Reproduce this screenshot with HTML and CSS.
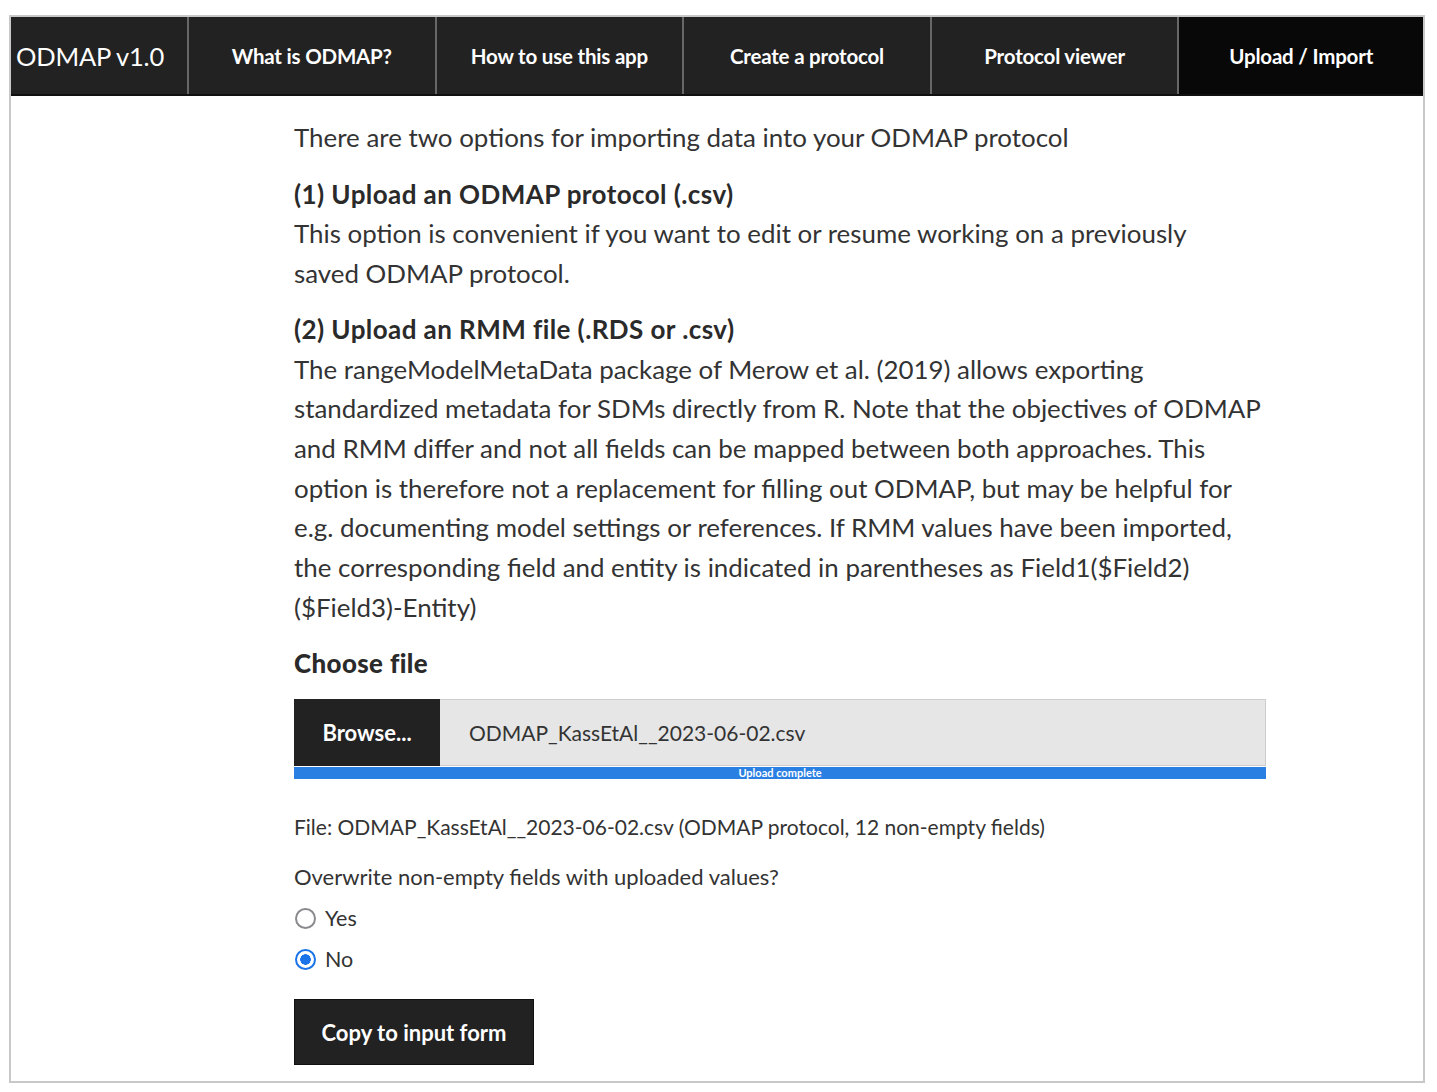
FILE: index.html
```html
<!DOCTYPE html>
<html lang="en">
<head>
<meta charset="utf-8">
<title>ODMAP v1.0 – Upload / Import</title>
<link rel="stylesheet" href="styles.css">
</head>
<body>
<div class="frame">
  <nav class="navbar">
    <div class="brand">ODMAP v1.0</div>
    <ul class="nav-items">
      <li class="nav-item">What is ODMAP?</li>
      <li class="nav-item">How to use this app</li>
      <li class="nav-item">Create a protocol</li>
      <li class="nav-item">Protocol viewer</li>
      <li class="nav-item active">Upload / Import</li>
    </ul>
  </nav>

  <main class="content">
    <p class="intro">There are two options for importing data into your ODMAP protocol</p>

    <section class="option">
      <h4 class="option-title">(1) Upload an ODMAP protocol (.csv)</h4>
      <p>This option is convenient if you want to edit or resume working on a previously<br>saved ODMAP protocol.</p>
    </section>

    <section class="option">
      <h4 class="option-title">(2) Upload an RMM file (.RDS or .csv)</h4>
      <p>The rangeModelMetaData package of Merow et al. (2019) allows exporting<br>standardized metadata for SDMs directly from R. Note that the objectives of ODMAP<br>and RMM differ and not all fields can be mapped between both approaches. This<br>option is therefore not a replacement for filling out ODMAP, but may be helpful for<br>e.g. documenting model settings or references. If RMM values have been imported,<br>the corresponding field and entity is indicated in parentheses as Field1($Field2)<br>($Field3)-Entity)</p>
    </section>

    <div class="file-group">
      <label class="file-label">Choose file</label>
      <div class="file-input">
        <span class="browse-btn">Browse...</span>
        <span class="file-name">ODMAP_KassEtAl__2023-06-02.csv</span>
      </div>
      <div class="progress"><span>Upload complete</span></div>
    </div>

    <p class="small-text file-info">File: ODMAP_KassEtAl__2023-06-02.csv (ODMAP protocol, 12 non-empty fields)</p>

    <div class="radio-group">
      <p class="radio-label">Overwrite non-empty fields with uploaded values?</p>
      <div class="radio"><span class="radio-circle"></span><span>Yes</span></div>
      <div class="radio"><span class="radio-circle checked"></span><span>No</span></div>
    </div>

    <button class="copy-btn" type="button">Copy to input form</button>
  </main>
</div>
</body>
</html>
```

FILE: styles.css
```css
* { box-sizing: border-box; }

body {
  margin: 0;
  background: #fff;
  font-family: Lato, "Noto Sans", sans-serif;
  color: #333;
}

.frame {
  margin: 15px 0 0 9px;
  width: 1416px;
  height: 1068px;
  border: 2px solid #c8c8c8;
  background: #fff;
}

.navbar {
  display: flex;
  height: 79px;
  background: #222;
  border-bottom: 2px solid #101010;
}

.brand {
  flex: none;
  width: 176px;
  display: flex;
  align-items: center;
  padding-left: 5px;
  color: #fff;
  font-size: 25.5px;
  font-weight: 400;
  letter-spacing: -0.2px;
}

.nav-items {
  display: flex;
  flex: 1;
  margin: 0;
  padding: 0;
  list-style: none;
}

.nav-item {
  flex: none;
  width: 247.6px;
  display: flex;
  align-items: center;
  justify-content: center;
  border-left: 2px solid #676767;
  color: #fff;
  font-size: 20.5px;
  font-weight: 700;
  letter-spacing: -0.2px;
}

.nav-item.active {
  flex: 1 1 0;
  width: auto;
  background: #080808;
}

.content {
  width: 1000px;
  margin: 22px 0 0 283px;
  font-size: 25.9px;
  line-height: 39.7px;
  color: #333;
}

.content p { margin: 0; }

.intro { margin-bottom: 17px !important; }

.option { margin-bottom: 16px; }

.option-title {
  margin: 0;
  font-size: 26px;
  line-height: 39.7px;
  font-weight: 700;
  letter-spacing: 0.42px;
  color: #2a2a2a;
}

.file-group { width: 972px; }

.file-label {
  display: block;
  font-weight: 900;
  letter-spacing: 0.4px;
  color: #2a2a2a;
  line-height: 40px;
  margin-bottom: 16px;
}

.file-input {
  display: flex;
  height: 67px;
}

.browse-btn {
  width: 146px;
  display: flex;
  align-items: center;
  justify-content: center;
  background: #222;
  color: #fff;
  font-size: 22px;
  font-weight: 700;
}

.file-name {
  flex: 1;
  display: flex;
  align-items: center;
  padding-left: 29px;
  background: #e6e6e6;
  border: 1px solid #cdcdcd;
  border-left: none;
  color: #333;
  font-size: 21px;
}

.progress {
  margin-top: 1px;
  height: 12px;
  background: #2a7fe2;
  display: flex;
  justify-content: center;
  align-items: center;
}

.progress span {
  color: #fff;
  font-size: 11px;
  line-height: 12px;
  font-weight: 700;
}

.small-text {
  font-size: 21px;
  line-height: 32px;
}

.file-info { margin-top: 32px !important; }

.radio-group { margin-top: 18px; }

.radio-label {
  font-size: 22px;
  line-height: 32px;
  margin-bottom: 9px !important;
}

.radio {
  display: flex;
  align-items: center;
  gap: 9px;
  height: 32px;
  margin-bottom: 9px;
  font-size: 21.5px;
  padding-left: 1px;
}

.radio-circle {
  width: 21px;
  height: 21px;
  border-radius: 50%;
  border: 2px solid #8a8a8e;
  background: #fff;
}

.radio-circle.checked {
  border: 2px solid #1a73e8;
  background: radial-gradient(circle, #1a73e8 0 5px, #fff 5.5px);
}

.copy-btn {
  margin-top: 15px;
  width: 240px;
  height: 66px;
  background: #222;
  color: #fff;
  border: 1px solid #111;
  font-family: inherit;
  font-size: 22px;
  font-weight: 700;
  padding: 0;
  cursor: pointer;
}
```
